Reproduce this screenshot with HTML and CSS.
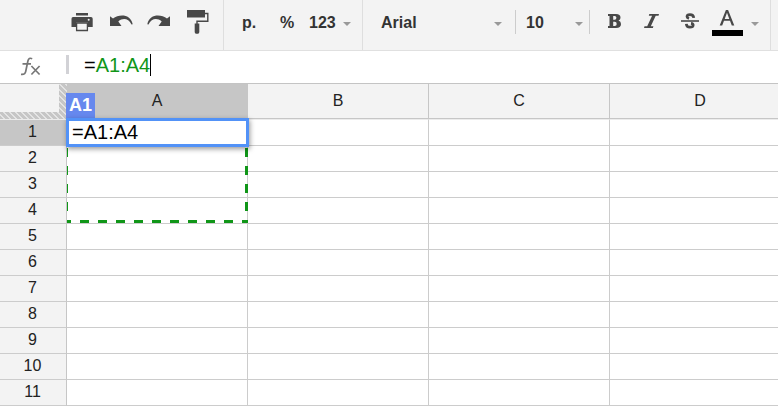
FILE: index.html
```html
<!DOCTYPE html>
<html lang="en">
<head>
<meta charset="utf-8">
<title>Spreadsheet</title>
<link rel="stylesheet" href="styles.css">
</head>
<body>
<div class="app">
  <div class="toolbar">
    <div class="group actions">
      <svg width="22" height="20" viewBox="0 0 22 20"><path d="M5 1h12v2.400H5zM2 5h18q1.700 0 1.700 1.700V15H17v-4.500H5V15H.5V6.700Q.5 5 2 5z"/><path d="M5.600 11h10.800v7.500H5.600z" fill="#f3f3f3" stroke="#484848" stroke-width="1.300"/><circle cx="17.700" cy="7.700" r="1" fill="#f3f3f3"/></svg>
      <svg width="23" height="12" viewBox="0 0 23 12"><path d="M0 1.200 3 3.500C9-1.200 20.500-1.500 22.700 9.200L21.500 9.500C18.500 3.500 13 2.500 8.300 6.500L11.500 11H0z"/></svg>
      <svg width="23" height="12" viewBox="0 0 23 12"><path d="M23 1.200 20 3.500C14-1.200 2.500-1.500.3 9.200L1.500 9.500C4.500 3.500 10 2.500 14.700 6.500L11.500 11H23z"/></svg>
      <svg width="22" height="24" viewBox="0 0 22 24"><path d="M0 0h18v7.500H0z"/><path d="M18 3.500h2.800v7.700H10v3" fill="none" stroke="#484848" stroke-width="1.400"/><path d="M7.700 13.500h4.600V22q0 1.800-1.400 1.800H9.100q-1.400 0-1.400-1.800z"/></svg>
    </div>
    <div class="group formats">
      <span class="currency">p.</span><span class="percent">%</span><span>123</span><i class="caret"></i>
    </div>
    <div class="group fonts">
      <span class="family">Arial</span><i class="caret"></i>
      <div class="size"><span>10</span><i class="caret"></i></div>
      <svg class="bold" width="14" height="14" viewBox="0 0 14 14"><path fill-rule="evenodd" d="M0 0h8q4.500 0 4.500 3.700 0 2-2 2.900Q13 7.500 13 10q0 4-5 4H0v-2h1.500V2H0zM5.200 2v3.700h1.400q1.800 0 1.800-1.900T6.600 2zM5.200 7.800V12h1.500q2 0 2-2.100T6.700 7.800z"/></svg>
      <svg class="italic" width="15" height="14" viewBox="0 0 15 14"><path d="M5.300 0H15l-.5 1.800h-2.800L6.800 12.200h2.600L8.900 14H0l.5-1.800h2.700L8.100 1.800H4.800z"/></svg>
      <svg class="strike" width="18" height="16" viewBox="0 0 18 16"><path d="M0 7.200h18v1.600H0z"/><path d="M12.800 4.800Q12.400 1.600 9 1.600 6 1.600 6 3.700q0 1.200 2 1.900M10 10.300q2.200.3 2.200 1.700 0 2.200-3.300 2.200-3.300 0-3.600-3.400" fill="none" stroke="#484848" stroke-width="2.700"/></svg>
      <div class="color"><svg width="16" height="16" viewBox="0 0 16 16"><path fill-rule="evenodd" d="M6.900 0h2.200L15.300 15.500h-2.500L11 10.800H5L3.200 15.500H.7zM8 2.700 5.700 8.900h4.600z"/></svg><b></b></div>
      <i class="caret last"></i>
    </div>
  </div>
  <div class="formula">
    <svg class="fx" width="21" height="19" viewBox="0 0 21 19"><path d="M12.200 1.700Q8.700.1 7.900 4L5.700 14.500Q5.200 17.900 1 17.400M2.500 6.800h8.500M11.400 9l8.200 8.500M19.600 9l-8.200 8.500" fill="none" stroke="#777" stroke-width="1.700"/></svg><i class="bar"></i>
    <span class="expr">=<span class="ref">A1:A4</span></span><i class="cursor"></i>
  </div>
  <div class="sheet">
    <div class="corner"><div></div></div>
    <div class="col active">A</div><div class="col">B</div><div class="col">C</div><div class="col">D</div>
    <div class="row first active">1</div><div class="cell first"></div><div class="cell first"></div><div class="cell first"></div><div class="cell first"></div>
    <div class="row">2</div><div class="cell"></div><div class="cell"></div><div class="cell"></div><div class="cell"></div>
    <div class="row">3</div><div class="cell"></div><div class="cell"></div><div class="cell"></div><div class="cell"></div>
    <div class="row">4</div><div class="cell"></div><div class="cell"></div><div class="cell"></div><div class="cell"></div>
    <div class="row">5</div><div class="cell"></div><div class="cell"></div><div class="cell"></div><div class="cell"></div>
    <div class="row">6</div><div class="cell"></div><div class="cell"></div><div class="cell"></div><div class="cell"></div>
    <div class="row">7</div><div class="cell"></div><div class="cell"></div><div class="cell"></div><div class="cell"></div>
    <div class="row">8</div><div class="cell"></div><div class="cell"></div><div class="cell"></div><div class="cell"></div>
    <div class="row">9</div><div class="cell"></div><div class="cell"></div><div class="cell"></div><div class="cell"></div>
    <div class="row">10</div><div class="cell"></div><div class="cell"></div><div class="cell"></div><div class="cell"></div>
    <div class="row">11</div><div class="cell"></div><div class="cell"></div><div class="cell"></div><div class="cell"></div>
    <svg class="range" width="181" height="75" viewBox="0 0 181 75"><path d="M.5 0v72" stroke-width="1"/><path d="M179.500 0v72" stroke-width="3"/><path d="M0 73.500h181" stroke-width="3" stroke-dashoffset="5"/></svg>
    <div class="tag">A1</div>
    <div class="editor">=A1:A4</div>
  </div>
</div>
</body>
</html>
```
FILE: styles.css
```css
* { box-sizing: border-box; }
body { margin: 0; font-family: "Liberation Sans", Arial, sans-serif; color: #222; }
.app { width: 778px; height: 408px; overflow: hidden; background: #fff; }
svg { display: block; flex: none; fill: #484848; }

.toolbar { display: flex; height: 51px; background: #f3f3f3; border-bottom: 1px solid #e0e0e0; }
.group { display: flex; height: 50px; border-right: 1px solid #dedede; font-size: 16px; font-weight: bold; line-height: 18px; color: #333; padding-top: 14px; align-items: flex-start; }
.actions { width: 224px; padding: 10px 15px 0 71px; }
.actions svg { margin-top: 5px; }
.actions svg:nth-child(1) { margin: 2px 17px 0 0; }
.actions svg:nth-child(2) { margin-right: 14px; }
.actions svg:nth-child(4) { margin: 0 0 0 17px; }
.formats { width: 139px; padding-left: 18px; }
.currency { width: 38px; }
.percent { width: 29px; }
.caret { flex: none; width: 8px; height: 4px; margin-top: 8px; border: 4px solid transparent; border-top-color: #999; border-bottom: 0; }
.formats .caret { margin-left: 7px; }
.fonts { width: 408px; padding-left: 18px; }
.family { width: 113px; }
.size { display: flex; width: 75px; height: 24px; margin: -4px 0 0 13px; padding: 4px 0 0 10px; border: 1px solid #ccc; border-width: 0 1px; }
.size span { width: 49px; }
.size .caret { margin-left: 0; }
.bold { margin: 0 0 0 18px; }
.italic { margin: 0 0 0 22px; }
.strike { margin: -1px 0 0 22px; }
.color { width: 31px; margin: -4px 0 0 13px; }
.color svg { margin-left: 7px; }
.color b { display: block; width: 31px; height: 6px; margin-top: 4px; background: #000; }
.last { margin-left: 8px; }

.formula { display: flex; height: 32px; background: #fff; font-size: 20px; line-height: 29px; color: #000; }
.fx { margin: 6px 25px 0 20px; }
.bar { width: 3px; height: 19px; margin: 4px 15px 0 0; background: #d2d2d6; }
.ref { color: #109618; }
.cursor { width: 1px; height: 22px; margin-top: 3px; background: #000; }

.sheet { position: relative; display: grid; grid-template-columns: 67px repeat(4, 181px); grid-template-rows: 35px 27px repeat(10, 26px); border-top: 1px solid #c4c4c4; font-size: 16px; text-align: center; color: #222; }
.corner { padding: 0 8px 7px 0; background: repeating-linear-gradient(45deg, #c6c6c6 0 2.800px, #e4e4e4 2.800px 4.240px); }
.corner div { height: 28px; background: #f3f3f3; }
.col { background: #f3f3f3; line-height: 33px; border-right: 1px solid #c6c6c6; border-bottom: 1px solid #c6c6c6; }
.row { background: #f3f3f3; line-height: 23px; padding-right: 1px; border-right: 1px solid #c6c6c6; border-bottom: 1px solid #ccc; }
.active { background: #c6c6c6; }
.cell { border-right: 1px solid #ccc; border-bottom: 1px solid #ccc; }
.first { border-top: 1px solid #ececec; }
.range { position: absolute; left: 67px; top: 64px; fill: none; stroke: #109618; stroke-dasharray: 9 9; }
.tag { position: absolute; left: 66px; top: 9px; width: 29px; height: 26px; background: #6688ee; color: #fff; font-size: 18px; line-height: 25px; font-weight: bold; }
.editor { position: absolute; left: 66px; top: 34px; width: 183px; height: 29px; border: 3px solid #5292f7; background: #fff; box-shadow: 1px 2px 5px rgba(0,0,0,.4); color: #000; font-size: 20px; line-height: 22px; text-align: left; padding-left: 3px; }
```
